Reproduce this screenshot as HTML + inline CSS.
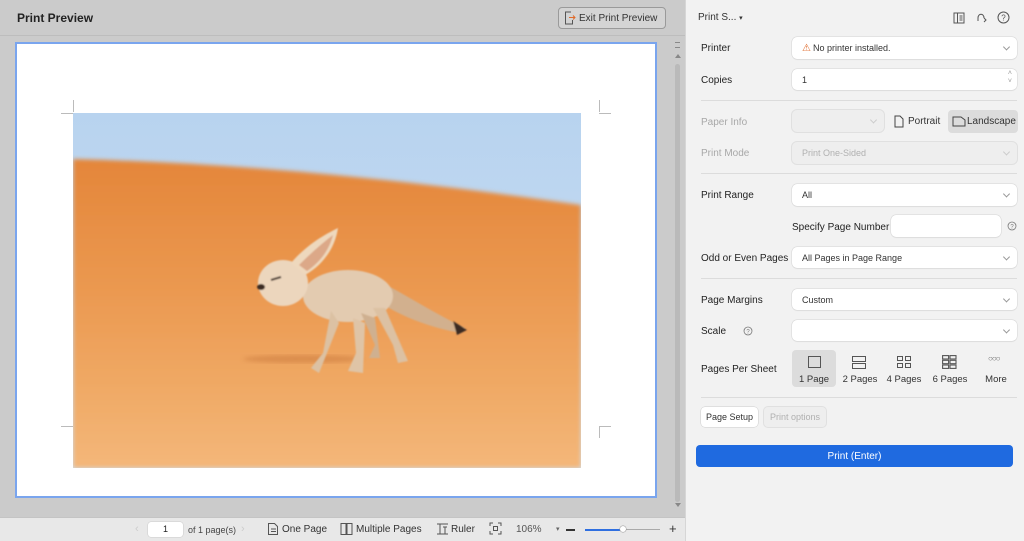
<!DOCTYPE html>
<html><head><meta charset="utf-8"><style>
*{box-sizing:border-box;margin:0;padding:0}
body{width:1024px;height:541px;overflow:hidden;font-family:"Liberation Sans",sans-serif;background:#f2f2f2;position:relative;color:#222}
.a{position:absolute}
.left{left:0;top:0;width:685px;height:541px;background:#cbcbcb}
.hdr{left:0;top:0;width:685px;height:36px;border-bottom:1px solid #bdbdbd;background:#cbcbcb}
.t{font-size:11px;white-space:nowrap}
.lbl{font-size:10px;color:#222;left:701px;white-space:nowrap}
.dis{color:#a8a8a8}
.sel{background:#fff;border-radius:5px;box-shadow:0 0 0 .5px #d4d4d4,0 1px 1px rgba(0,0,0,.06);font-size:9px;color:#333;padding-left:10px;display:flex;align-items:center}
.sel.d{background:#eeeeee;color:#b0b0b0;box-shadow:0 0 0 1px #e0e0e0}
.chev{position:absolute;right:8px;top:50%;width:5px;height:5px;border-right:1px solid #999;border-bottom:1px solid #999;transform:translateY(-70%) rotate(45deg)}
.div{left:701px;width:316px;height:1px;background:#dcdcdc}
.ico{border:1.3px solid #555}
.pp{font-size:9.5px;color:#333;text-align:center;width:44px}
.fc{display:flex;align-items:center;justify-content:center}
</style></head><body>
<div class="a left"></div>
<div class="a hdr"></div>
<div class="a t" style="left:17px;top:11px;font-size:12px;font-weight:bold;color:#222">Print Preview</div>
<div class="a" style="left:558px;top:7px;width:108px;height:22px;border:1px solid #9a9a9a;border-radius:4px;background:#d4d4d4"></div>
<svg class="a" style="left:564px;top:11px" width="12" height="14" viewBox="0 0 12 14"><path d="M7 1H1.5v12H8.5V9" fill="none" stroke="#555" stroke-width="1"/><path d="M5 6.5h6M9 4.5l2 2-2 2" fill="none" stroke="#e06a2a" stroke-width="1"/></svg>
<div class="a t" style="left:579px;top:13px;font-size:10px;color:#333">Exit Print Preview</div>
<!-- page -->
<div class="a" style="left:15px;top:42px;width:642px;height:456px;background:#fff;border:2px solid #7aa5ee"></div>
<div class="a" style="left:73px;top:100px;width:1px;height:12px;background:#bbb"></div>
<div class="a" style="left:61px;top:113px;width:12px;height:1px;background:#bbb"></div>
<div class="a" style="left:599px;top:100px;width:1px;height:12px;background:#bbb"></div>
<div class="a" style="left:599px;top:113px;width:12px;height:1px;background:#bbb"></div>
<div class="a" style="left:73px;top:426px;width:1px;height:12px;background:#bbb"></div>
<div class="a" style="left:61px;top:426px;width:12px;height:1px;background:#bbb"></div>
<div class="a" style="left:599px;top:426px;width:1px;height:12px;background:#bbb"></div>
<div class="a" style="left:599px;top:426px;width:12px;height:1px;background:#bbb"></div>
<svg class="a" style="left:73px;top:113px" width="508" height="355" viewBox="0 0 508 355">
<defs>
<linearGradient id="sk" x1="0" y1="0" x2="0" y2="1"><stop offset="0" stop-color="#b8d3ef"/><stop offset="1" stop-color="#cde0f2"/></linearGradient>
<linearGradient id="sd" x1="0" y1="0" x2="0" y2="1"><stop offset="0" stop-color="#e4863a"/><stop offset=".45" stop-color="#eb9a52"/><stop offset=".75" stop-color="#f0aa66"/><stop offset="1" stop-color="#f4b77a"/></linearGradient>
<filter id="bl"><feGaussianBlur stdDeviation="2"/></filter>
<filter id="bl1"><feGaussianBlur stdDeviation="0.8"/></filter>
</defs>
<rect width="508" height="355" fill="url(#sk)"/>
<path d="M0 46 C150 50 300 62 508 92 L508 355 L0 355Z" fill="url(#sd)" filter="url(#bl)"/>
<ellipse cx="230" cy="246" rx="60" ry="4" fill="#c9783e" opacity=".5" filter="url(#bl)"/>
<g filter="url(#bl1)">
<path d="M300 165 C330 180 360 200 392 215 L388 220 C360 215 330 205 305 188Z" fill="#d2b08e"/>
<path d="M380 208 L394 217 L384 222Z" fill="#3a2a22"/>
<ellipse cx="275" cy="183" rx="45" ry="26" fill="#e3cbb0"/>
<path d="M258 198 L250 240 L238 255 L246 260 L266 210Z" fill="#dcc1a3"/>
<path d="M280 205 L283 240 L275 258 L290 260 L292 210Z" fill="#dfc4a6"/>
<path d="M300 195 L320 232 L325 250 L335 248 L312 195Z" fill="#dcc1a3"/>
<path d="M288 200 L302 232 L296 245 L307 245 L302 205Z" fill="#cfb090"/>
<ellipse cx="210" cy="170" rx="25" ry="23" fill="#ecd6bd"/>
<path d="M218 150 C235 130 255 120 265 115 C262 135 250 152 232 162Z" fill="#eed8bd"/>
<path d="M226 152 C240 138 252 128 260 122 C256 138 246 150 234 158Z" fill="#dca888"/>
<ellipse cx="188" cy="174" rx="4" ry="3" fill="#3a2a22"/>
<path d="M198 167 l10 -3" stroke="#4a3a30" stroke-width="2"/>
</g>
</svg>
<!-- scrollbar -->
<div class="a" style="left:675px;top:64px;width:5px;height:438px;background:#bababa;border-radius:3px"></div>
<div class="a" style="left:675px;top:42px;width:5px;height:6px;border-top:1px solid #888;border-bottom:1px solid #888"></div>
<div class="a" style="left:675px;top:54px;width:0;height:0;border-left:3px solid transparent;border-right:3px solid transparent;border-bottom:4px solid #888"></div>
<div class="a" style="left:675px;top:503px;width:0;height:0;border-left:3px solid transparent;border-right:3px solid transparent;border-top:4px solid #888"></div>
<!-- bottom bar -->
<div class="a" style="left:0;top:517px;width:685px;height:24px;background:#e8e8e8;border-top:1px solid #c4c4c4"></div>
<div class="a t" style="left:135px;top:523px;color:#ccc">‹</div>
<div class="a" style="left:148px;top:522px;width:35px;height:15px;background:#fff;border-radius:3px;box-shadow:0 0 0 .5px #ccc;font-size:9px;text-align:center;line-height:15px">1</div>
<div class="a t" style="left:188px;top:525px;font-size:9px;color:#444">of 1 page(s)</div>
<div class="a t" style="left:241px;top:523px;color:#ccc">›</div>
<svg class="a" style="left:267px;top:522px" width="12" height="14"><path d="M1.5 1.5h6l3 3v8h-9z M4 7h5M4 9.5h5" fill="none" stroke="#555" stroke-width="1"/></svg>
<div class="a t" style="left:282px;top:524px;font-size:10px;color:#333">One Page</div>
<svg class="a" style="left:340px;top:522px" width="13" height="14"><rect x="1" y="1.5" width="5" height="11" fill="none" stroke="#555"/><rect x="7" y="1.5" width="5" height="11" fill="none" stroke="#555"/></svg>
<div class="a t" style="left:356px;top:524px;font-size:10px;color:#333">Multiple Pages</div>
<svg class="a" style="left:436px;top:522px" width="13" height="14"><path d="M1 2h11M1 12h11M4 2v10M9 5v7M7 5h4" fill="none" stroke="#555"/></svg>
<div class="a t" style="left:451px;top:524px;font-size:10px;color:#333">Ruler</div>
<svg class="a" style="left:489px;top:522px" width="13" height="13"><path d="M1 4V1h3M9 1h3v3M12 9v3H9M4 12H1V9" fill="none" stroke="#555"/><rect x="4.5" y="4.5" width="4" height="4" fill="none" stroke="#555"/></svg>
<div class="a t" style="left:516px;top:524px;font-size:10px;color:#555">106%</div>
<div class="a t" style="left:556px;top:525px;font-size:7px;color:#666">▾</div>
<div class="a" style="left:566px;top:529px;width:9px;height:1.5px;background:#333"></div>
<div class="a" style="left:585px;top:529px;width:38px;height:1.5px;background:#2f6fe0"></div>
<div class="a" style="left:623px;top:529px;width:37px;height:1px;background:#aaa"></div>
<div class="a" style="left:620px;top:526px;width:6px;height:6px;border-radius:50%;background:#fff;box-shadow:0 0 0 .5px #999"></div>
<div class="a t" style="left:669px;top:521px;font-size:13px;color:#333">+</div>
<!-- right panel -->
<div class="a" style="left:685px;top:0;width:1px;height:541px;background:#d6d6d6"></div>
<div class="a t" style="left:698px;top:12px;font-size:10px;color:#333">Print S... <span style="font-size:7px">▾</span></div>
<svg class="a" style="left:953px;top:12px" width="12" height="12"><rect x="1" y="1" width="10" height="10" fill="none" stroke="#555"/><path d="M4.5 1v10M6.5 4h3M6.5 6h3M6.5 8h3" stroke="#555"/></svg>
<svg class="a" style="left:975px;top:11px" width="12" height="14"><path d="M3 7 C3 2 9 2 9 7 M3 7v3 M9 7l2 2-2 2" fill="none" stroke="#555"/></svg>
<svg class="a" style="left:997px;top:11px" width="13" height="13"><circle cx="6.5" cy="6.5" r="5.5" fill="none" stroke="#555"/><text x="6.5" y="9.5" font-size="8" text-anchor="middle" fill="#555" font-family="Liberation Sans">?</text></svg>

<div class="a lbl" style="top:43px">Printer</div>
<div class="a sel" style="left:792px;top:37px;width:225px;height:22px"><span style="color:#e06a2a;font-size:10px;margin-right:2px">⚠</span>No printer installed.<i class="chev"></i></div>
<div class="a lbl" style="top:75px">Copies</div>
<div class="a sel" style="left:792px;top:69px;width:225px;height:21px">1<span style="position:absolute;right:5px;top:1px;font-size:7px;color:#999;line-height:8px">˄<br>˅</span></div>
<div class="a div" style="top:100px"></div>
<div class="a lbl dis" style="top:117px">Paper Info</div>
<div class="a sel d" style="left:792px;top:110px;width:92px;height:22px"><i class="chev" style="border-color:#ccc"></i></div>
<svg class="a" style="left:894px;top:115px" width="10" height="13"><path d="M1 1h5l3 3v8H1z" fill="none" stroke="#444"/></svg>
<div class="a t" style="left:908px;top:116px;font-size:10px;color:#333">Portrait</div>
<div class="a" style="left:948px;top:110px;width:70px;height:23px;background:#dcdcdc;border-radius:4px"></div>
<svg class="a" style="left:952px;top:116px" width="14" height="11"><path d="M1 1h8l4 3v6H1z" fill="none" stroke="#444"/></svg>
<div class="a t" style="left:967px;top:116px;font-size:10px;color:#333">Landscape</div>
<div class="a lbl dis" style="top:148px">Print Mode</div>
<div class="a sel d" style="left:792px;top:142px;width:225px;height:22px">Print One-Sided<i class="chev" style="border-color:#ccc"></i></div>
<div class="a div" style="top:173px"></div>
<div class="a lbl" style="top:190px">Print Range</div>
<div class="a sel" style="left:792px;top:184px;width:225px;height:22px">All<i class="chev"></i></div>
<div class="a t" style="left:792px;top:222px;font-size:10px">Specify Page Number</div>
<div class="a sel" style="left:891px;top:215px;width:110px;height:22px"></div>
<svg class="a" style="left:1007px;top:221px" width="10" height="10"><circle cx="5" cy="5" r="4" fill="none" stroke="#777" stroke-width=".8"/><text x="5" y="7.5" font-size="6" text-anchor="middle" fill="#777">?</text></svg>
<div class="a lbl" style="top:253px">Odd or Even Pages</div>
<div class="a sel" style="left:792px;top:247px;width:225px;height:21px">All Pages in Page Range<i class="chev"></i></div>
<div class="a div" style="top:278px"></div>
<div class="a lbl" style="top:295px">Page Margins</div>
<div class="a sel" style="left:792px;top:289px;width:225px;height:21px">Custom<i class="chev"></i></div>
<div class="a lbl" style="top:326px">Scale</div>
<svg class="a" style="left:743px;top:326px" width="10" height="10"><circle cx="5" cy="5" r="4" fill="none" stroke="#777" stroke-width=".8"/><text x="5" y="7.5" font-size="6" text-anchor="middle" fill="#777">?</text></svg>
<div class="a sel" style="left:792px;top:320px;width:225px;height:21px"><i class="chev"></i></div>
<div class="a lbl" style="top:364px">Pages Per Sheet</div>
<div class="a" style="left:792px;top:350px;width:44px;height:37px;background:#dcdcdc;border-radius:4px"></div>
<div class="a ico" style="left:808px;top:356px;width:13px;height:12px"></div>
<div class="a pp" style="left:792px;top:374px">1 Page</div>
<div class="a ico" style="left:852px;top:356px;width:14px;height:6px"></div>
<div class="a ico" style="left:852px;top:363px;width:14px;height:6px"></div>
<div class="a pp" style="left:838px;top:374px">2 Pages</div>
<div class="a ico" style="left:897px;top:356px;width:6px;height:5px"></div><div class="a ico" style="left:905px;top:356px;width:6px;height:5px"></div>
<div class="a ico" style="left:897px;top:363px;width:6px;height:5px"></div><div class="a ico" style="left:905px;top:363px;width:6px;height:5px"></div>
<div class="a pp" style="left:882px;top:374px">4 Pages</div>
<svg class="a" style="left:942px;top:355px" width="15" height="14"><g fill="none" stroke="#555" stroke-width="1.1"><rect x=".6" y=".6" width="6" height="3.4"/><rect x="8" y=".6" width="6" height="3.4"/><rect x=".6" y="5.3" width="6" height="3.4"/><rect x="8" y="5.3" width="6" height="3.4"/><rect x=".6" y="10" width="6" height="3.4"/><rect x="8" y="10" width="6" height="3.4"/></g></svg>
<div class="a pp" style="left:928px;top:374px">6 Pages</div>
<div class="a t" style="left:988px;top:354px;font-size:8px;color:#666;letter-spacing:-1px">○○○</div>
<div class="a pp" style="left:974px;top:374px">More</div>
<div class="a div" style="top:397px"></div>
<div class="a fc" style="left:701px;top:407px;width:57px;height:20px;background:#fff;border-radius:4px;box-shadow:0 0 0 .5px #ccc;font-size:9px;color:#333">Page Setup</div>
<div class="a fc" style="left:764px;top:407px;width:62px;height:20px;background:#eee;border-radius:4px;box-shadow:0 0 0 1px #e0e0e0;font-size:9px;color:#b0b0b0">Print options</div>
<div class="a fc" style="left:696px;top:445px;width:317px;height:22px;background:#1f6ae0;border-radius:4px;font-size:10px;color:#fff">Print (Enter)</div>
</body></html>
